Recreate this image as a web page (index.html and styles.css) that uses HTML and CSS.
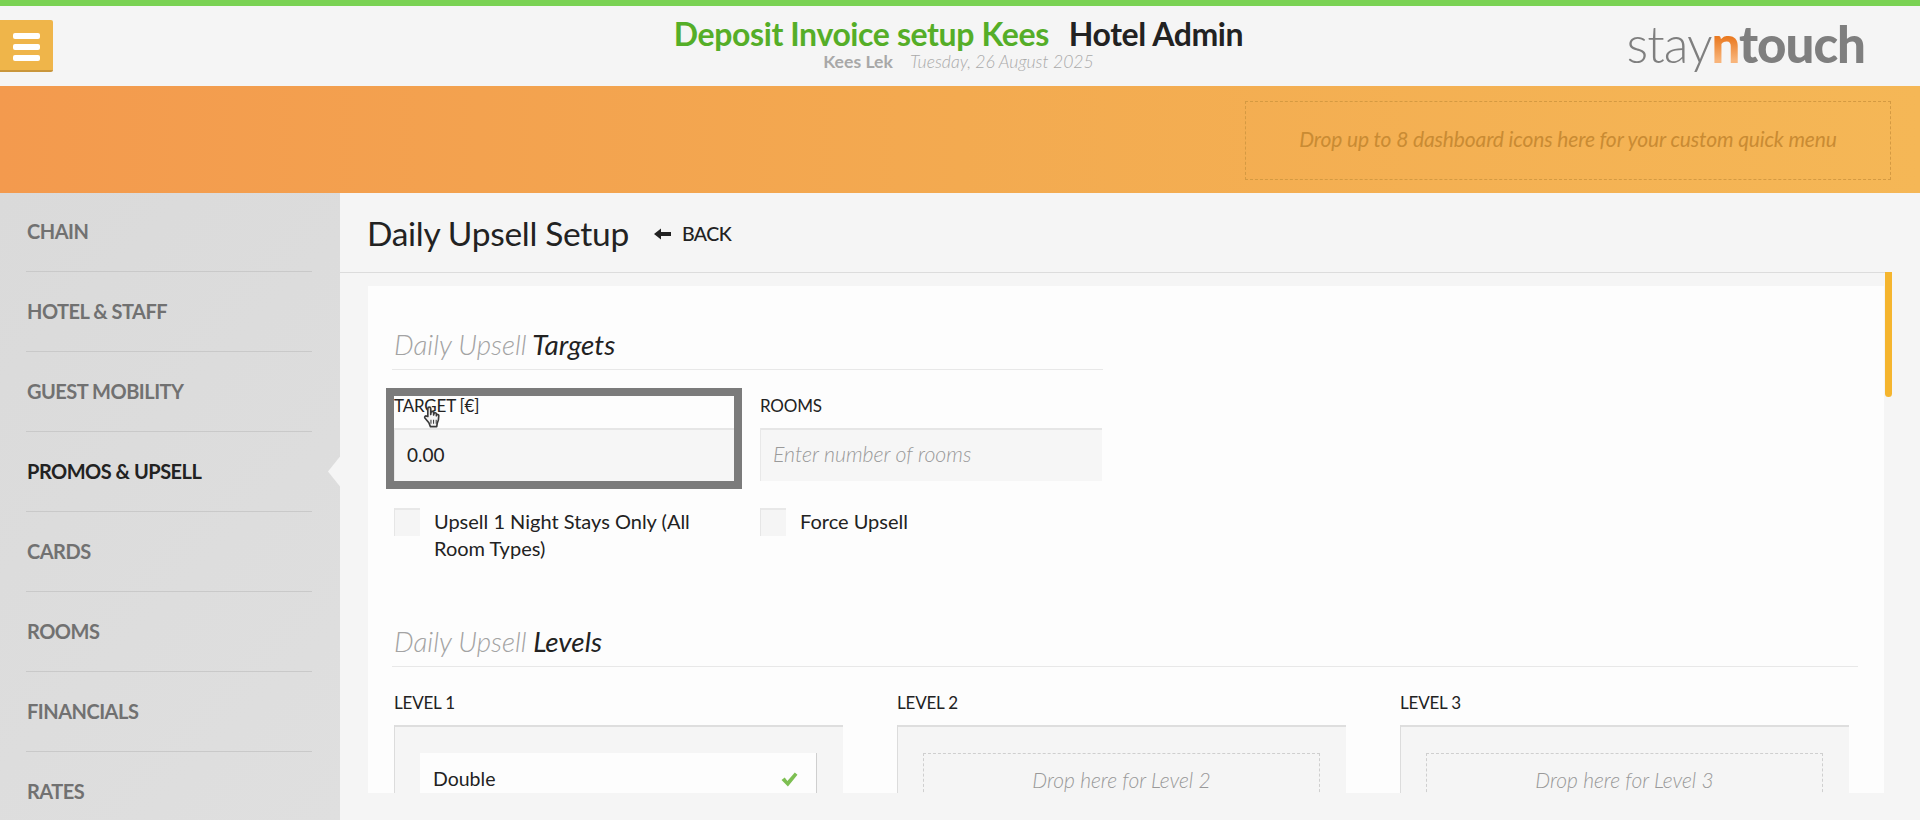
FILE: index.html
```html
<!DOCTYPE html>
<html lang="en">
  <head>
    <meta charset="UTF-8" />
    <title>Daily Upsell Setup</title>
    <link rel="stylesheet" href="styles.css">
  </head>
  <body>
    <header id="top-header">
      <div class="header-left">
        <button class="menu-button"><span></span><span></span><span></span></button>
      </div>
      <div class="header-title">
        <h1><span class="hotel-name">Deposit Invoice setup Kees</span><span class="app-name">Hotel Admin</span></h1>
        <p><span class="user-name">Kees Lek</span><em class="today">Tuesday, 26 August 2025</em></p>
      </div>
      <div class="header-logo"><span class="logo-stay">stay</span><span class="logo-n">n</span><span class="logo-touch">touch</span></div>
    </header>

    <div id="quick-bar">
      <div class="quick-drop">Drop up to 8 dashboard icons here for your custom quick menu</div>
    </div>

    <div id="page">
      <nav id="sidebar">
        <ul>
          <li>CHAIN</li>
          <li>HOTEL &amp; STAFF</li>
          <li>GUEST MOBILITY</li>
          <li class="active">PROMOS &amp; UPSELL</li>
          <li>CARDS</li>
          <li>ROOMS</li>
          <li>FINANCIALS</li>
          <li>RATES</li>
        </ul>
      </nav>

      <main id="content">
        <div class="page-head">
          <h2>Daily Upsell Setup</h2>
          <a class="back-link">
            <svg width="17" height="12" viewBox="0 0 17 12"><path d="M0 6L7 0.5V4H17V8H7V11.5Z" fill="#222"/></svg>
            BACK
          </a>
        </div>

        <div class="card-wrap">
          <div class="card">
            <section class="targets">
              <h3><em>Daily Upsell</em> Targets</h3>
              <div class="target-grid">
                <div class="field highlighted">
                  <label>TARGET [€]</label>
                  <input type="text" value="0.00" />
                  <svg class="hand-cursor" width="20" height="23" viewBox="0 0 18 22">
                    <path d="M5 11V3.5a1.4 1.4 0 0 1 2.8 0V9l.2-1.6a1.3 1.3 0 0 1 2.6.2V9.500l.2-1a1.2 1.2 0 0 1 2.400.3v1.400l.2-.5a1.100 1.100 0 0 1 2.100.4c0 3-.3 5.500-1.500 7.400l-.5 3.200H7.500L6 17 2.200 12.500a1.300 1.300 0 0 1 1.800-1.800Z" fill="#f4f4f4" stroke="#3a3a3a" stroke-width="1.600" stroke-linejoin="round"/>
                    <path d="M8 14v4M10.500 14v4M13 14v4" stroke="#3a3a3a" stroke-width="1"/>
                  </svg>
                </div>
                <div class="field">
                  <label>ROOMS</label>
                  <input type="text" placeholder="Enter number of rooms" />
                </div>
                <div class="check-row">
                  <span class="check-box"></span>
                  <span>Upsell 1 Night Stays Only (All Room Types)</span>
                </div>
                <div class="check-row">
                  <span class="check-box"></span>
                  <span>Force Upsell</span>
                </div>
              </div>
            </section>

            <section class="levels">
              <h3><em>Daily Upsell</em> Levels</h3>
              <div class="level-grid">
                <div class="level">
                  <label>LEVEL 1</label>
                  <div class="level-box">
                    <div class="level-item">
                      Double
                      <svg width="17" height="15" viewBox="0 0 16 14"><path d="M0.500 7.500L3.500 5L6 8.500L13 0.500L15.500 2.500L6.500 13.500Z" fill="#7dbf52"/></svg>
                    </div>
                  </div>
                </div>
                <div class="level">
                  <label>LEVEL 2</label>
                  <div class="level-box">
                    <div class="level-drop">Drop here for Level 2</div>
                  </div>
                </div>
                <div class="level">
                  <label>LEVEL 3</label>
                  <div class="level-box">
                    <div class="level-drop">Drop here for Level 3</div>
                  </div>
                </div>
              </div>
            </section>
          </div>
          <div class="scroll-thumb"></div>
        </div>
      </main>
    </div>
  </body>
</html>
```

FILE: styles.css
```css
* {
  box-sizing: border-box;
  margin: 0;
  padding: 0;
}

body {
  font-family: Lato, "Open Sans", sans-serif;
  background-color: #f5f5f5;
  color: #222;
  height: 820px;
  overflow: hidden;
}

#top-header {
  height: 86px;
  border-top: 6px solid #7ad254;
  background-color: #f5f5f5;
  display: grid;
  grid-template-columns: 1fr auto 1fr;
}

.header-left {
  padding-top: 14px;
}

.menu-button {
  width: 53px;
  height: 52px;
  background-color: #efb54a;
  border: none;
  border-bottom: 2px solid #c9963c;
  border-radius: 0 2px 2px 0;
  display: flex;
  flex-direction: column;
  gap: 5px;
  padding: 13px 13px 0;
}

.menu-button span {
  display: block;
  width: 27px;
  height: 6px;
  background-color: #fff;
  border-radius: 2px;
}

.header-title {
  text-align: center;
  padding: 8px 3px 0 0;
}

.header-title h1 {
  font-size: 32px;
  line-height: 40px;
  font-weight: 700;
  letter-spacing: -0.4px;
}

.hotel-name {
  color: #55ae28;
  margin-right: 20px;
}

.app-name {
  color: #222;
}

.header-title p {
  font-size: 17.6px;
  line-height: 20px;
  margin-top: -2px;
}

.user-name {
  color: #a8a8a8;
  font-weight: 700;
  margin-right: 17px;
}

.today {
  color: #aaa;
  font-weight: 300;
}

.header-logo {
  justify-self: end;
  padding: 8px 55px 0 0;
  font-size: 51px;
  line-height: 60px;
  letter-spacing: -1px;
  color: #7f7f7f;
}

.logo-stay {
  font-weight: 300;
}

.logo-n {
  font-weight: 900;
  background: linear-gradient(180deg, #ea7a22 40%, #f8b47a 78%);
  -webkit-background-clip: text;
  background-clip: text;
  color: transparent;
}

.logo-touch {
  font-weight: 900;
}

#quick-bar {
  height: 107px;
  background: linear-gradient(90deg, #f39a4e, #f3aa50 50%, #f5b756);
  padding: 15px 29px 0 1245px;
}

.quick-drop {
  height: 79px;
  border: 1px dashed #d49a42;
  font-size: 21px;
  font-style: italic;
  letter-spacing: -0.13px;
  color: #c98b33;
  display: flex;
  align-items: center;
  justify-content: center;
  padding-bottom: 5px;
}

#page {
  display: flex;
  height: 627px;
}

#sidebar {
  width: 340px;
  flex-shrink: 0;
  background: linear-gradient(135deg, #dadada, #dfdfdf);
  overflow: hidden;
  padding: 0 28px 0 26px;
}

#sidebar ul {
  list-style: none;
}

#sidebar li {
  height: 80px;
  padding: 0 0 2px 1px;
  display: flex;
  align-items: center;
  border-bottom: 1px solid #c9c9c9;
  font-size: 20px;
  letter-spacing: -0.5px;
  font-weight: 700;
  color: #717171;
  position: relative;
}

#sidebar li:first-child {
  height: 79px;
}

#sidebar li.active {
  color: #222;
}

#sidebar li.active::after {
  content: "";
  position: absolute;
  right: -28px;
  top: calc(50% - 15px);
  width: 12px;
  height: 30px;
  background-color: #f5f5f5;
  clip-path: polygon(100% 0, 0 50%, 100% 100%);
}

#content {
  flex-grow: 1;
  min-width: 0;
}

.page-head {
  height: 80px;
  margin-right: 33px;
  border-bottom: 1px solid #dcdcdc;
  padding-left: 27px;
  display: flex;
  align-items: center;
}

.page-head h2 {
  font-size: 33.500px;
  font-weight: 400;
  letter-spacing: -0.3px;
}

.back-link {
  margin-left: 25px;
  padding-top: 2px;
  font-size: 19.500px;
  letter-spacing: -0.5px;
  font-weight: 500;
  display: flex;
  align-items: center;
  gap: 11px;
}

.card-wrap {
  margin: 0 28px 0 28px;
  padding-top: 13px;
  position: relative;
}

.card {
  width: 1516px;
  height: 507px;
  background-color: #fdfdfd;
  overflow: hidden;
  padding: 41px 26px 0 24px;
}

.scroll-thumb {
  position: absolute;
  left: 1517px;
  top: -1px;
  width: 7px;
  height: 125px;
  background-color: #f5b52e;
  border-radius: 0 0 4px 4px;
}

h3 {
  font-size: 27.800px;
  line-height: 36px;
  font-weight: 400;
  font-style: italic;
  padding-left: 2px;
  border-bottom: 1px solid #e8e8e8;
  height: 43px;
}

.targets h3 {
  width: 711px;
}

h3 em {
  color: #a3a3a3;
  font-weight: 300;
}

.target-grid {
  width: 710px;
  margin: 26px 0 0 2px;
  display: grid;
  grid-template-columns: 340px 342px;
  column-gap: 26px;
}

label {
  display: block;
  font-size: 17px;
  letter-spacing: -0.2px;
  line-height: 20px;
  color: #222;
}

.field {
  position: relative;
}

.field input {
  display: block;
  width: 100%;
  height: 53px;
  margin-top: 12px;
  border: none;
  border-left: 1px solid #e8e8e8;
  box-shadow: inset 0 2px 0 #e6e6e6;
  background-color: #f6f6f6;
  font-family: inherit;
  font-size: 19px;
  color: #222;
  padding: 0 12px;
  outline: none;
}

.field input::placeholder {
  font-size: 21.300px;
  font-style: italic;
  font-weight: 300;
  color: #9a9a9a;
}

.highlighted {
  outline: 8px solid #7b7b7b;
}

.hand-cursor {
  position: absolute;
  left: 28px;
  top: 9px;
}

.check-row {
  display: flex;
  gap: 14px;
  margin-top: 27px;
  font-size: 20px;
  line-height: 27px;
}

.check-box {
  width: 26px;
  height: 28px;
  flex-shrink: 0;
  background-color: #f5f5f5;
  border-left: 1px solid #e6e6e6;
  box-shadow: inset 0 2px 0 #e8e8e8;
}

.levels {
  margin-top: 62px;
}

.level-grid {
  margin: 26px 0 0 2px;
  display: grid;
  grid-template-columns: 449px 449px 449px;
  column-gap: 54px;
}

.level-box {
  margin-top: 12px;
  height: 120px;
  background-color: #f5f5f5;
  border-left: 1px solid #dcdcdc;
  box-shadow: inset 0 2px 0 #dedede;
  padding: 28px 26px 0 25px;
}

.level-item {
  height: 70px;
  background-color: #fdfdfd;
  border-right: 1px solid #cfcfcf;
  padding: 14px 18px 0 13px;
  display: flex;
  justify-content: space-between;
  font-size: 19.500px;
  line-height: 24px;
}

.level-item svg {
  margin-top: 5px;
}

.level-drop {
  height: 70px;
  border: 1px dashed #cfcfcf;
  padding-top: 14px;
  text-align: center;
  font-size: 21px;
  line-height: 24px;
  font-style: italic;
  font-weight: 300;
  color: #999;
}
```
